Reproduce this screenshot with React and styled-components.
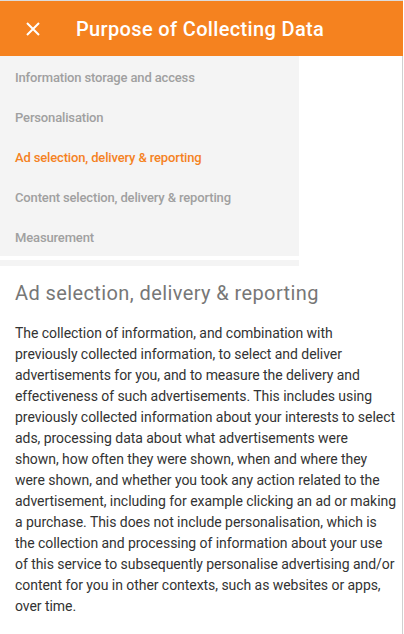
import React, { useState } from "react";
import styled, { createGlobalStyle } from "styled-components";

const GlobalStyle = createGlobalStyle`
  body {
    margin: 0;
    background: #ffffff;
    font-family: Roboto, "Liberation Sans", sans-serif;
  }
`;

const purposes = [
  "Information storage and access",
  "Personalisation",
  "Ad selection, delivery & reporting",
  "Content selection, delivery & reporting",
  "Measurement",
];

// the paragraph breaks after "were" in the source layout
const textStart =
  "The collection of information, and combination with previously collected information, to select and deliver advertisements for you, and to measure the delivery and effectiveness of such advertisements. This includes using previously collected information about your interests to select ads, processing data about what advertisements were";
const textEnd =
  "shown, how often they were shown, when and where they were shown, and whether you took any action related to the advertisement, including for example clicking an ad or making a purchase. This does not include personalisation, which is the collection and processing of information about your use of this service to subsequently personalise advertising and/or content for you in other contexts, such as websites or apps, over time.";

const App = () => {
  const [active, setActive] = useState(2);

  return (
    <>
      <GlobalStyle />
      <Page>
        <Header>
          <CloseButton aria-label="close">
            <svg width="14" height="14" viewBox="0 0 14 14">
              <path d="M1 1L13 13M13 1L1 13" stroke="#fff" strokeWidth="2" />
            </svg>
          </CloseButton>
          <Title>Purpose of Collecting Data</Title>
        </Header>
        <Menu>
          {purposes.map((p, i) => (
            <MenuItem key={p} $active={i === active} onClick={() => setActive(i)}>
              {p}
            </MenuItem>
          ))}
        </Menu>
        <MenuFooter />
        <Content>
          <Heading>{purposes[active]}</Heading>
          <Body>
            {textStart}
            <br />
            {textEnd}
          </Body>
        </Content>
      </Page>
    </>
  );
};

export default App;

const Page = styled.div`
  width: 403px;
  min-height: 634px;
  box-sizing: border-box;
  border-top: 1px solid #dcdcdc;
  border-right: 1px solid #d0d0d0;
`;

const Header = styled.div`
  display: flex;
  align-items: center;
  height: 55px;
  margin-right: -1px;
  background: #f5821f;
`;

const CloseButton = styled.button`
  display: flex;
  align-items: center;
  justify-content: center;
  width: 24px;
  height: 24px;
  margin-left: 21px;
  padding: 0;
  border: none;
  background: none;
  cursor: pointer;
`;

const Title = styled.h1`
  margin: 0 0 0 31px;
  color: #ffffff;
  font-size: 20px;
  font-weight: 500;
  letter-spacing: 0.35px;
`;

const Menu = styled.ul`
  width: 299px;
  margin: 0;
  padding: 0;
  list-style: none;
  background: #f4f4f4;
`;

const MenuItem = styled.li`
  height: 40px;
  line-height: 43px;
  padding-left: 15px;
  font-size: 13px;
  font-weight: 500;
  letter-spacing: -0.15px;
  color: ${(p) => (p.$active ? "#f5821f" : "#a0a0a0")};
  cursor: pointer;
`;

const MenuFooter = styled.div`
  width: 299px;
  height: 6px;
  margin-top: 4px;
  background: #f4f4f4;
`;

const Content = styled.div`
  padding: 13px 4px 20px 15px;
`;

const Heading = styled.h2`
  margin: 0;
  color: #777777;
  font-size: 20px;
  font-weight: 400;
  line-height: 28px;
  letter-spacing: 0.4px;
`;

const Body = styled.p`
  margin: 16px 0 0;
  color: #333333;
  font-size: 14px;
  line-height: 21px;
  letter-spacing: -0.05px;
`;
